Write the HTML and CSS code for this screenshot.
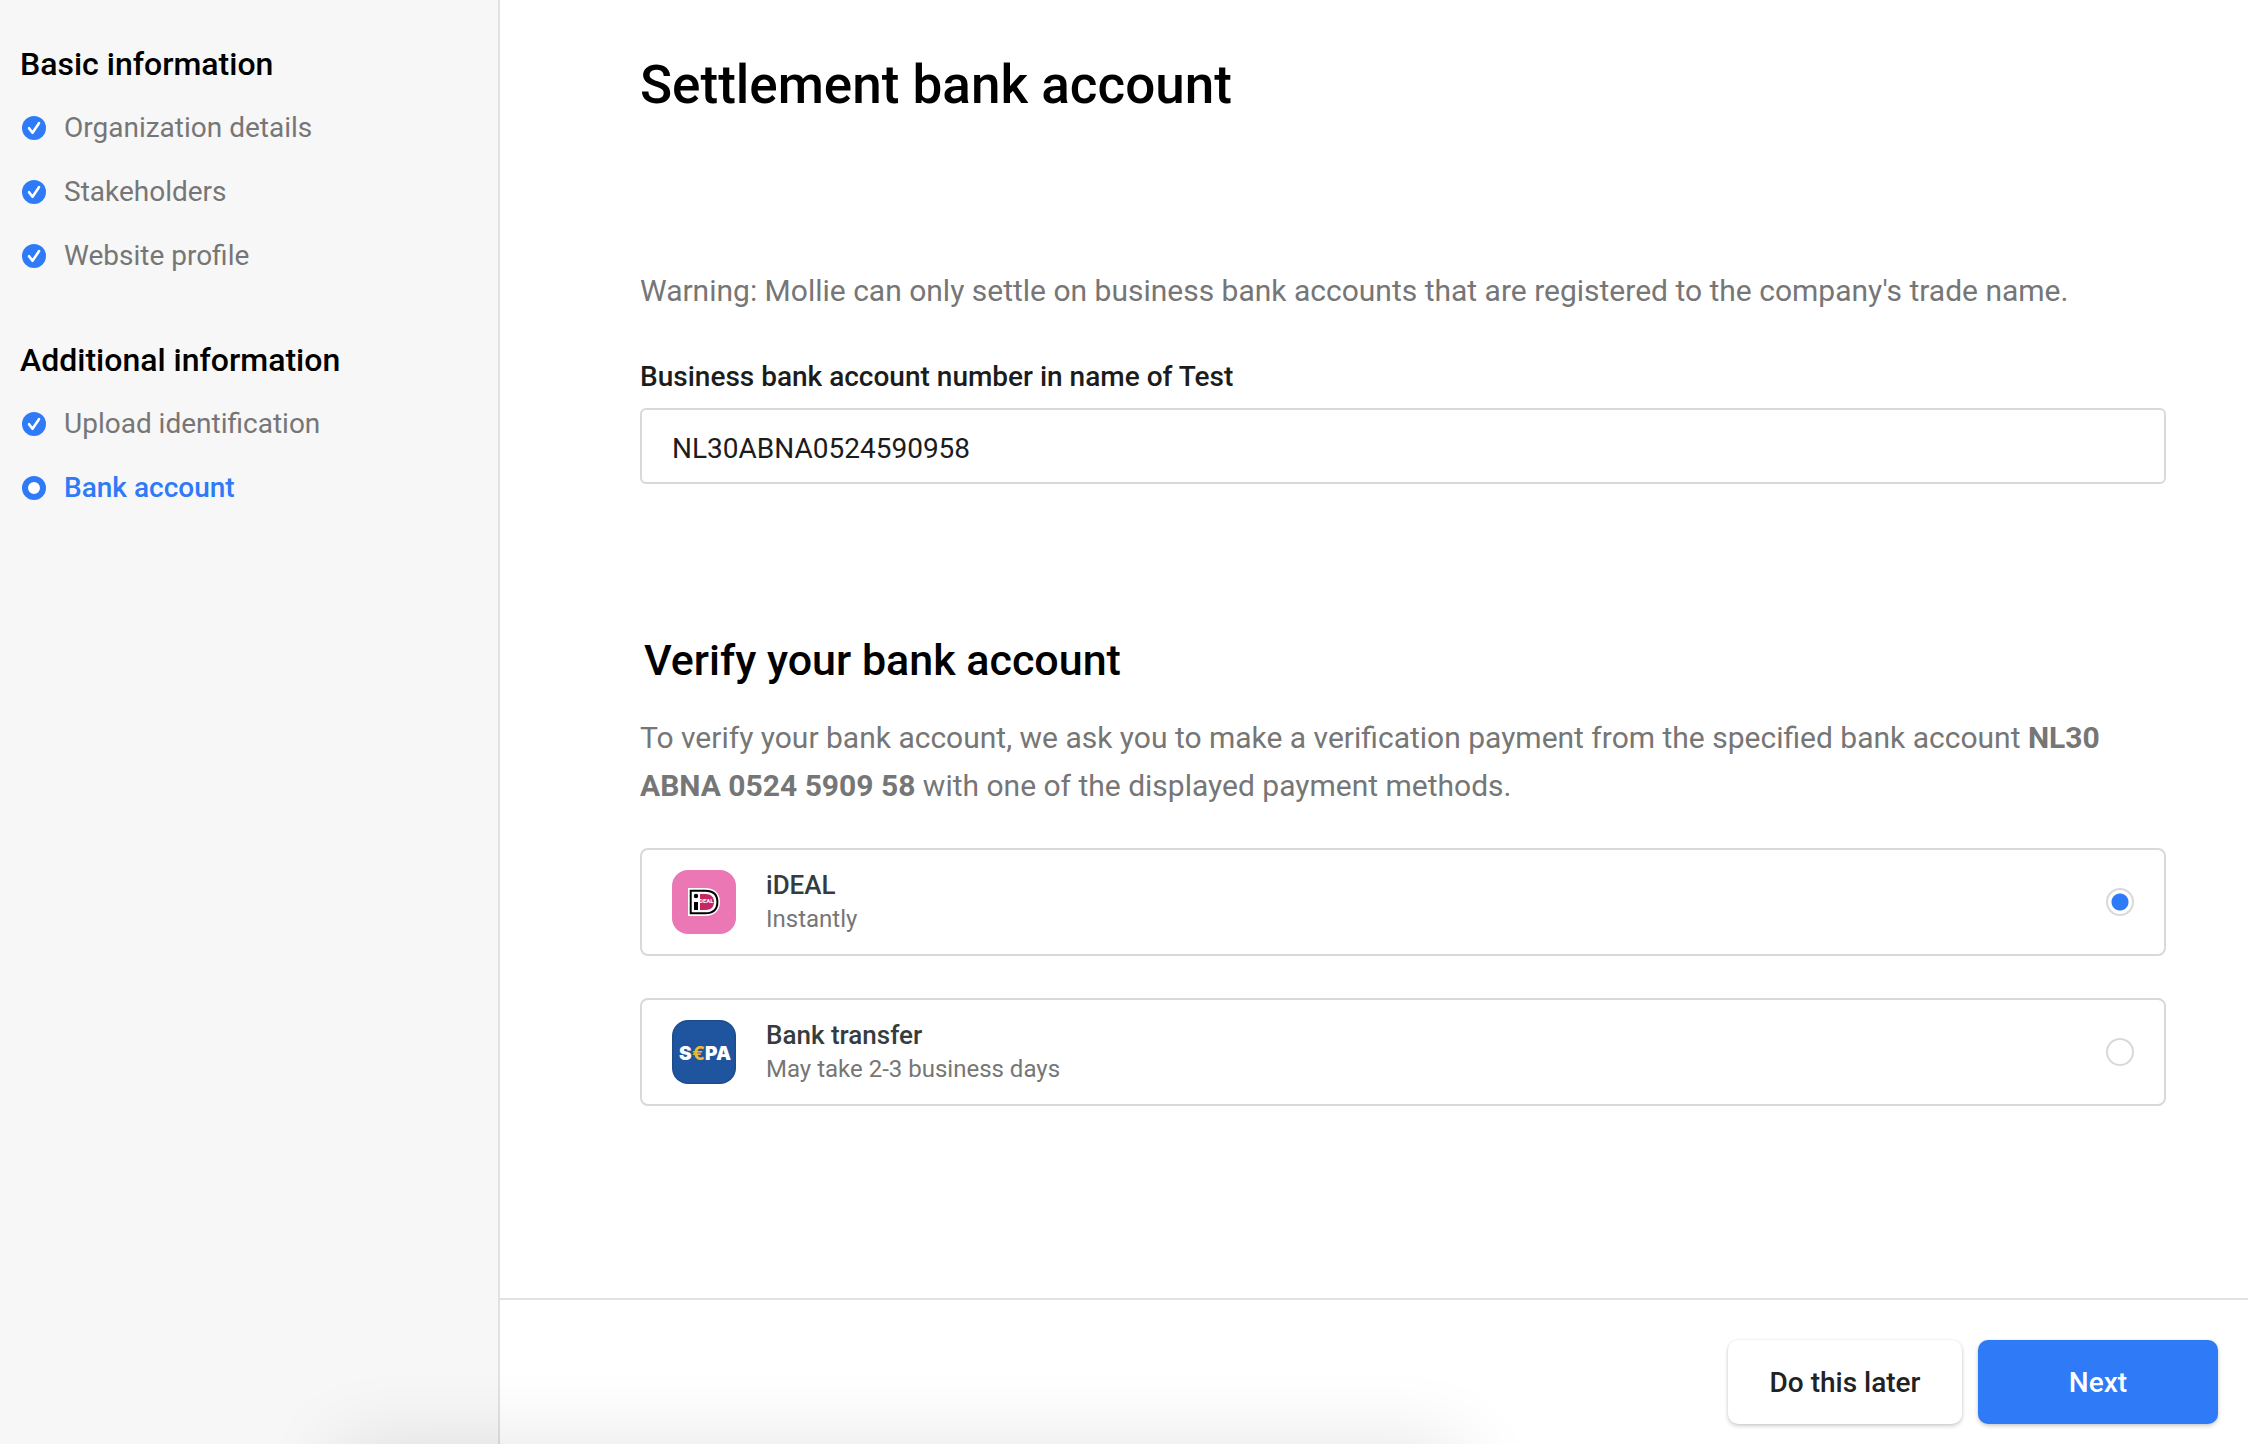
FILE: index.html
```html
<!DOCTYPE html>
<html lang="en">
<head>
  <meta charset="utf-8">
  <meta name="viewport" content="width=device-width, initial-scale=1">
  <title>Settlement bank account</title>
  <link rel="stylesheet" href="styles.css">
</head>
<body>
  <svg class="sprite" aria-hidden="true">
    <symbol id="check" viewBox="0 0 24 24">
      <circle cx="12" cy="12" r="12" fill="#2e7af7"/>
      <path d="M7 12.200l3.500 4.600L17 7.200" fill="none" stroke="#fff" stroke-width="2.600" stroke-linecap="round" stroke-linejoin="round"/>
    </symbol>
    <symbol id="current" viewBox="0 0 24 24">
      <circle cx="12" cy="12" r="9" fill="#fff" stroke="#2e7af7" stroke-width="6"/>
    </symbol>
  </svg>

  <div class="layout">
    <nav class="sidebar" aria-label="Onboarding steps">
      <section class="step-group">
        <h2 class="step-title">Basic information</h2>
        <ul class="steps">
          <li><a class="step" href="#organization"><svg class="step-icon"><use href="#check"/></svg>Organization details</a></li>
          <li><a class="step" href="#stakeholders"><svg class="step-icon"><use href="#check"/></svg>Stakeholders</a></li>
          <li><a class="step" href="#website"><svg class="step-icon"><use href="#check"/></svg>Website profile</a></li>
        </ul>
      </section>
      <section class="step-group">
        <h2 class="step-title">Additional information</h2>
        <ul class="steps">
          <li><a class="step" href="#identification"><svg class="step-icon"><use href="#check"/></svg>Upload identification</a></li>
          <li><a class="step step-current" href="#bank" aria-current="step"><svg class="step-icon"><use href="#current"/></svg>Bank account</a></li>
        </ul>
      </section>
    </nav>

    <form class="main">
      <main class="content">
        <h1 class="page-title">Settlement bank account</h1>
        <p class="text">Warning: Mollie can only settle on business bank accounts that are registered to the company's trade name.</p>
        <label class="field-label" for="iban">Business bank account number in name of Test</label>
        <input class="field" id="iban" type="text" value="NL30ABNA0524590958">

        <h2 class="section-title">Verify your bank account</h2>
        <p class="text">To verify your bank account, we ask you to make a verification payment from the specified bank account <strong>NL30 ABNA 0524 5909 58</strong> with one of the displayed payment methods.</p>

        <div class="methods">
          <label class="method" for="ideal">
            <svg class="logo" viewBox="0 0 64 64" aria-hidden="true">
              <rect width="64" height="64" rx="16" fill="#eb78b4"/>
              <path d="M16 18h17c9.500 0 15 5.500 15 14s-5.500 14-15 14H16z" fill="#fff"/>
              <path d="M18.700 20.700h14.500c8 0 12.200 4.300 12.200 11.300s-4.200 11.300-12.200 11.300H18.700z" fill="#fff" stroke="#000" stroke-width="2"/>
              <path d="M28 24h5.500c5.500 0 8.500 3 8.500 8s-3 8-8.500 8H28z" fill="#c32864"/>
              <circle cx="24" cy="26" r="2.200"/>
              <path d="M22 32h4v8h-4z"/>
              <text class="ideal-mark" x="27" y="33">DEAL</text>
            </svg>
            <span class="method-text">
              <span class="method-name">iDEAL</span>
              <span class="method-note">Instantly</span>
            </span>
            <input class="radio" id="ideal" type="radio" name="method" checked>
          </label>
          <label class="method" for="transfer">
            <svg class="logo" viewBox="0 0 64 64" aria-hidden="true">
              <rect width="64" height="64" rx="16" fill="#1d4c8c"/>
              <rect x="1.500" y="1.500" width="61" height="61" rx="14.500" fill="#1f559f"/>
              <text class="sepa-mark" x="7" y="40">S</text>
              <text class="sepa-mark sepa-euro" x="20" y="40">€</text>
              <text class="sepa-mark" x="33" y="40">P</text>
              <text class="sepa-mark" x="44" y="40">A</text>
            </svg>
            <span class="method-text">
              <span class="method-name">Bank transfer</span>
              <span class="method-note">May take 2-3 business days</span>
            </span>
            <input class="radio" id="transfer" type="radio" name="method">
          </label>
        </div>
      </main>

      <footer class="footer">
        <button class="button" type="button">Do this later</button>
        <button class="button button-primary" type="submit">Next</button>
      </footer>
    </form>
  </div>
  <div class="bottom-shade"></div>
</body>
</html>
```

FILE: styles.css
```css
* {
  box-sizing: border-box;
  margin: 0;
  padding: 0;
}

body {
  background: #fff;
  color: #1c1c1c;
  font-family: Roboto, "Liberation Sans", sans-serif;
  font-size: 28px;
  line-height: 40px;
}

.sprite {
  display: none;
}

.layout {
  display: flex;
  min-height: 100vh;
}

.sidebar {
  display: flex;
  flex: 0 0 500px;
  flex-direction: column;
  gap: 64px;
  padding: 44px 20px;
  border-right: 2px solid #e1e1e1;
  background: #f7f7f7;
}

.step-group,
.steps {
  display: flex;
  flex-direction: column;
  gap: 24px;
  list-style: none;
}

.step-title {
  color: #000;
  font-size: 32px;
  font-weight: 500;
  line-height: 40px;
}

.step {
  display: flex;
  align-items: center;
  gap: 18px;
  padding-left: 2px;
  color: #767676;
  text-decoration: none;
}

.step-icon {
  width: 24px;
  height: 24px;
}

.step-current {
  color: #2e7af7;
  font-weight: 500;
}

.main {
  display: flex;
  flex: 1;
  flex-direction: column;
  min-width: 0;
}

.content {
  flex: 1;
  padding: 53px 82px 48px 140px;
}

.page-title {
  margin-bottom: 150px;
  color: #000;
  font-size: 53px;
  font-weight: 500;
  line-height: 64px;
}

.text {
  color: #767676;
  font-size: 30px;
  line-height: 48px;
}

.text strong {
  font-weight: 700;
}

.field-label {
  display: block;
  margin: 42px 0 11px;
  font-weight: 500;
}

.field {
  display: block;
  width: 100%;
  height: 76px;
  padding: 4px 30px 0;
  border: 2px solid #d9d9d9;
  border-radius: 6px;
  background: #fff;
  color: #1c1c1c;
  font: inherit;
}

.section-title {
  margin: 148px 0 26px;
  padding-left: 4px;
  color: #000;
  font-size: 43px;
  font-weight: 500;
  line-height: 56px;
}

.methods {
  display: flex;
  flex-direction: column;
  gap: 42px;
  margin-top: 38px;
}

.method {
  display: flex;
  align-items: center;
  gap: 30px;
  padding: 18px 30px;
  border: 2px solid #d9d9d9;
  border-radius: 8px;
}

.logo {
  width: 64px;
  height: 64px;
}

.ideal-mark {
  fill: #fff;
  font-size: 6px;
  font-weight: 700;
}

.sepa-mark {
  fill: #fff;
  font-family: Inter, sans-serif;
  font-size: 19px;
  font-weight: 900;
}

.sepa-euro {
  fill: #f3b633;
  font-weight: 700;
}

.method-text {
  display: flex;
  flex: 1;
  flex-direction: column;
  line-height: 34px;
}

.method-name {
  color: #353c40;
  font-size: 26px;
  font-weight: 500;
}

.method-note {
  color: #767676;
  font-size: 24px;
}

.radio {
  width: 28px;
  height: 28px;
  border: 2px solid #d9d9d9;
  border-radius: 50%;
  appearance: none;
}

.radio:checked {
  background: radial-gradient(circle, #2e7af7 8px, #fff 9px);
}

.footer {
  display: flex;
  justify-content: flex-end;
  gap: 16px;
  padding: 40px 30px 20px;
  border-top: 2px solid #e1e1e1;
}

.button {
  min-width: 234px;
  height: 84px;
  padding-top: 2px;
  border: 0;
  border-radius: 10px;
  background: #fff;
  box-shadow: 0 2px 4px rgba(0, 0, 0, 0.2), 0 0 2px rgba(0, 0, 0, 0.08);
  color: #222;
  font: inherit;
  font-weight: 500;
}

.button-primary {
  min-width: 240px;
  background: #2e7af7;
  color: #fff;
}

.bottom-shade {
  position: fixed;
  top: 100%;
  right: 35%;
  left: 15%;
  height: 200px;
  box-shadow: 0 0 80px rgba(0, 0, 0, 0.11);
  pointer-events: none;
}
```
